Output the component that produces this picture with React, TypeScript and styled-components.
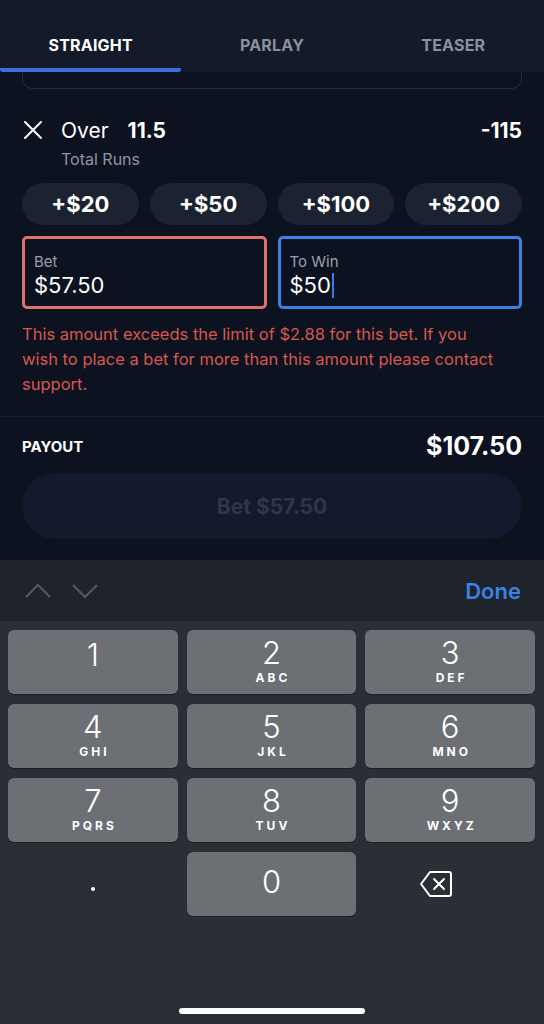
import styled, { createGlobalStyle } from 'styled-components';

const GlobalStyle = createGlobalStyle`
  html, body {
    margin: 0;
    padding: 0;
    background: #0c1220;
  }
  body {
    font-family: Inter, 'Noto Sans', 'Liberation Sans', sans-serif;
    -webkit-font-smoothing: antialiased;
  }
`;

const Screen = styled.div`
  width: 544px;
  height: 1024px;
  display: flex;
  flex-direction: column;
  background: #0c1220;
  overflow: hidden;
`;

const TabBar = styled.div`
  height: 72px;
  background: #131a29;
  display: grid;
  grid-template-columns: repeat(3, 1fr);
  flex-shrink: 0;
`;

const Tab = styled.div<{ $active?: boolean }>`
  display: flex;
  align-items: center;
  justify-content: center;
  padding-top: 21px;
  box-sizing: border-box;
  font-size: 16px;
  font-weight: 700;
  letter-spacing: 0.2px;
  color: ${(p) => (p.$active ? '#ffffff' : '#8a909c')};
  border-bottom: 4px solid ${(p) => (p.$active ? '#3a6fe0' : 'transparent')};
  border-radius: 0 0 3px 3px;
`;

const CardEdge = styled.div`
  margin: 0 22px;
  height: 16px;
  border: 1px solid #232b3a;
  border-top: none;
  border-radius: 0 0 10px 10px;
`;

const Content = styled.div`
  padding: 0 22px;
  display: flex;
  flex-direction: column;
`;

const SelectionRow = styled.div`
  display: flex;
  align-items: center;
  margin-top: 26px;
  height: 30px;
`;

const Close = styled.div`
  width: 22px;
  height: 22px;
  margin-right: 17px;
  display: flex;
  align-items: center;
  justify-content: center;
`;

const Pick = styled.span`
  font-size: 21px;
  color: #ffffff;
  font-weight: 400;
`;

const Line = styled.span`
  font-size: 21px;
  color: #ffffff;
  font-weight: 700;
  margin-left: 19px;
`;

const Odds = styled.span`
  margin-left: auto;
  font-size: 21px;
  font-weight: 700;
  color: #ffffff;
`;

const Market = styled.div`
  margin-left: 39px;
  font-size: 16px;
  color: #8e95a2;
  line-height: 20px;
  margin-top: 4px;
`;

const Chips = styled.div`
  display: grid;
  grid-template-columns: repeat(4, 1fr);
  gap: 11px;
  margin-top: 14px;
`;

const Chip = styled.div`
  height: 42px;
  border-radius: 21px;
  background: #1b2333;
  color: #ffffff;
  font-weight: 700;
  font-size: 22px;
  display: flex;
  align-items: center;
  justify-content: center;
`;

const Inputs = styled.div`
  display: grid;
  grid-template-columns: 1fr 1fr;
  gap: 11px;
  margin-top: 11px;
`;

const Field = styled.div<{ $color: string }>`
  height: 73px;
  box-sizing: border-box;
  border: 3px solid ${(p) => p.$color};
  border-radius: 5px;
  padding: 13px 9px 0;
  display: flex;
  flex-direction: column;
`;

const FieldLabel = styled.div`
  font-size: 15px;
  color: #9aa0ab;
  line-height: 19px;
`;

const FieldValue = styled.div`
  font-size: 22px;
  color: #ffffff;
  line-height: 28px;
  display: flex;
  align-items: center;
`;

const Caret = styled.span`
  display: inline-block;
  width: 2px;
  height: 25px;
  background: #3a7be4;
  margin-left: 1px;
`;

const ErrorText = styled.div`
  margin-top: 13px;
  font-size: 16.5px;
  line-height: 25px;
  color: #d9574f;
  padding-right: 24px;
`;

const Divider = styled.div`
  height: 1px;
  background: #161d2b;
  margin-top: 19px;
`;

const PayoutRow = styled.div`
  display: flex;
  align-items: center;
  justify-content: space-between;
  margin-top: 14px;
  height: 30px;
`;

const PayoutLabel = styled.span`
  font-size: 15px;
  font-weight: 700;
  color: #ffffff;
`;

const PayoutValue = styled.span`
  font-size: 25px;
  font-weight: 700;
  color: #ffffff;
`;

const BetButton = styled.div`
  margin-top: 12px;
  height: 66px;
  border-radius: 33px;
  background: #131a2e;
  color: #2e3749;
  font-size: 21px;
  font-weight: 700;
  display: flex;
  align-items: center;
  justify-content: center;
`;

const Keyboard = styled.div`
  margin-top: auto;
  height: 464px;
  background: #2b2e35;
  display: flex;
  flex-direction: column;
`;

const Toolbar = styled.div`
  height: 61px;
  background: #1f232b;
  display: flex;
  align-items: center;
  padding: 0 23px 0 25px;
`;

const Arrows = styled.div`
  display: flex;
  gap: 21px;
  align-items: center;
`;

const Done = styled.span`
  margin-left: auto;
  color: #3c82e2;
  font-size: 22px;
  font-weight: 600;
`;

const Keys = styled.div`
  display: grid;
  grid-template-columns: repeat(3, 1fr);
  grid-auto-rows: 64px;
  column-gap: 9px;
  row-gap: 10px;
  padding: 9px 9px 0 8px;
`;

const Key = styled.div<{ $plain?: boolean }>`
  border-radius: 6px;
  background: ${(p) => (p.$plain ? 'transparent' : '#6c6f74')};
  box-shadow: ${(p) => (p.$plain ? 'none' : '0 1px 0 #1c1e22')};
  display: flex;
  flex-direction: column;
  align-items: center;
  justify-content: center;
  color: #ffffff;
`;

const Digit = styled.span<{ $solo?: boolean }>`
  font-size: 31px;
  font-weight: 300;
  line-height: 34px;
  margin-top: ${(p) => (p.$solo ? '-14px' : '-4px')};
`;

const Letters = styled.span`
  font-size: 12px;
  font-weight: 700;
  letter-spacing: 3px;
  margin-left: 3px;
  line-height: 14px;
  margin-top: 1px;
`;

const Backspace = styled.div`
  margin-right: 28px;
  display: flex;
`;

const HomeBar = styled.div`
  margin: auto auto 10px;
  width: 186px;
  height: 6px;
  border-radius: 3px;
  background: #ffffff;
`;

const keys = [
  ['1', ''],
  ['2', 'ABC'],
  ['3', 'DEF'],
  ['4', 'GHI'],
  ['5', 'JKL'],
  ['6', 'MNO'],
  ['7', 'PQRS'],
  ['8', 'TUV'],
  ['9', 'WXYZ'],
];

export default function App() {
  return (
    <Screen>
      <GlobalStyle />
      <TabBar>
        <Tab $active>STRAIGHT</Tab>
        <Tab>PARLAY</Tab>
        <Tab>TEASER</Tab>
      </TabBar>
      <CardEdge />
      <Content>
        <SelectionRow>
          <Close>
            <svg width='20' height='20' viewBox='0 0 20 20'>
              <path d='M2 2 L18 18 M18 2 L2 18' stroke='#fff' strokeWidth='2' strokeLinecap='round' />
            </svg>
          </Close>
          <Pick>Over</Pick>
          <Line>11.5</Line>
          <Odds>-115</Odds>
        </SelectionRow>
        <Market>Total Runs</Market>
        <Chips>
          <Chip>+$20</Chip>
          <Chip>+$50</Chip>
          <Chip>+$100</Chip>
          <Chip>+$200</Chip>
        </Chips>
        <Inputs>
          <Field $color='#e06f6f'>
            <FieldLabel>Bet</FieldLabel>
            <FieldValue>$57.50</FieldValue>
          </Field>
          <Field $color='#3f7fe6'>
            <FieldLabel>To Win</FieldLabel>
            <FieldValue>
              $50
              <Caret />
            </FieldValue>
          </Field>
        </Inputs>
        <ErrorText>
          This amount exceeds the limit of $2.88 for this bet. If you wish to
          place a bet for more than this amount please contact support.
        </ErrorText>
      </Content>
      <Divider />
      <Content>
        <PayoutRow>
          <PayoutLabel>PAYOUT</PayoutLabel>
          <PayoutValue>$107.50</PayoutValue>
        </PayoutRow>
        <BetButton>Bet $57.50</BetButton>
      </Content>
      <Keyboard>
        <Toolbar>
          <Arrows>
            <svg width='26' height='16' viewBox='0 0 26 16'>
              <path d='M1 14 L13 2 L25 14' fill='none' stroke='#55595f' strokeWidth='2' />
            </svg>
            <svg width='26' height='16' viewBox='0 0 26 16'>
              <path d='M1 2 L13 14 L25 2' fill='none' stroke='#55595f' strokeWidth='2' />
            </svg>
          </Arrows>
          <Done>Done</Done>
        </Toolbar>
        <Keys>
          {keys.map(([d, l]) => (
            <Key key={d}>
              <Digit $solo={!l}>{d}</Digit>
              {l ? <Letters>{l}</Letters> : null}
            </Key>
          ))}
          <Key $plain>
            <svg width='6' height='6' viewBox='0 0 6 6' style={{ marginTop: 10 }}>
              <circle cx='3' cy='3' r='2' fill='#fff' />
            </svg>
          </Key>
          <Key>
            <Digit>0</Digit>
          </Key>
          <Key $plain>
            <Backspace>
              <svg width='34' height='28' viewBox='0 0 34 28'>
                <path
                  d='M11 2 H30 A2 2 0 0 1 32 4 V24 A2 2 0 0 1 30 26 H11 L2 14 Z'
                  fill='none'
                  stroke='#fff'
                  strokeWidth='2'
                  strokeLinejoin='round'
                />
                <path d='M15 9 L25 19 M25 9 L15 19' stroke='#fff' strokeWidth='2' strokeLinecap='round' />
              </svg>
            </Backspace>
          </Key>
        </Keys>
        <HomeBar />
      </Keyboard>
    </Screen>
  );
}
